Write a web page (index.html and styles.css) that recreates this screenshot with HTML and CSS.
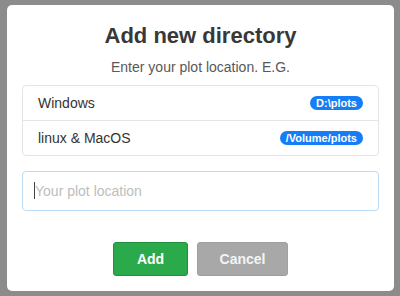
FILE: index.html
```html
<!DOCTYPE html>
<html>
<head>
    <title>Add new directory</title>
    <link rel="stylesheet" href="styles.css">
</head>
<body>
    <div class="modal">
        <h1 class="modal-title">Add new directory</h1>
        <p class="modal-sub">Enter your plot location. E.G.</p>

        <ul class="list">
            <li class="list-item">
                <span>Windows</span>
                <span class="badge">D:\plots</span>
            </li>
            <li class="list-item">
                <span>linux &amp; MacOS</span>
                <span class="badge">/Volume/plots</span>
            </li>
        </ul>

        <div class="field">
            <input class="field-input" type="text" placeholder="Your plot location">
            <span class="caret"></span>
        </div>

        <div class="actions">
            <button class="btn btn-add">Add</button>
            <button class="btn btn-cancel">Cancel</button>
        </div>
    </div>
</body>
</html>
```

FILE: styles.css
```css
body {
    margin: 0;
    height: 296px;
    background-color: #8c8c8c;
    font-family: "Liberation Sans", Arial, sans-serif;
    overflow: hidden;
}
.modal {
    box-sizing: border-box;
    width: 387px;
    height: 286px;
    margin: 5px 6px 5px 7px;
    padding: 0 15px;
    background: white;
    border-radius: 5px;
    display: flex;
    flex-direction: column;
}
.modal-title {
    margin: 18px 0 0;
    font-size: 22px;
    line-height: 26px;
    font-weight: bold;
    color: #383838;
    text-align: center;
}
.modal-sub {
    margin: 8px 0 0;
    font-size: 14px;
    line-height: 20px;
    color: #585858;
    text-align: center;
}
.list {
    list-style: none;
    margin: 8px 0 0;
    padding: 0;
    border: 1px solid #e4e4e4;
    border-radius: 4px;
}
.list-item {
    height: 34px;
    padding: 0 15px;
    display: flex;
    align-items: center;
    justify-content: space-between;
    font-size: 14px;
    color: #333;
}
.list-item + .list-item {
    border-top: 1px solid #e4e4e4;
}
.badge {
    background-color: #157ef7;
    color: white;
    font-size: 11px;
    font-weight: bold;
    line-height: 14px;
    padding: 0 6px;
    border-radius: 8px;
}
.field {
    position: relative;
    margin-top: 15px;
}
.field-input {
    box-sizing: border-box;
    display: block;
    width: 100%;
    height: 40px;
    padding: 0 12px;
    border: 1px solid #b9dbf4;
    border-radius: 4px;
    font-family: inherit;
    font-size: 14px;
    color: #333;
    outline: none;
}
.field-input::placeholder {
    color: #bdbdbd;
}
.caret {
    position: absolute;
    left: 12px;
    top: 11px;
    width: 1px;
    height: 17px;
    background: #444;
}
.actions {
    margin-top: 31px;
    display: flex;
    justify-content: center;
    gap: 9px;
}
.btn {
    box-sizing: border-box;
    height: 34px;
    border-radius: 3px;
    font-family: inherit;
    font-size: 14px;
    font-weight: bold;
    color: white;
    cursor: pointer;
}
.btn-add {
    width: 75px;
    background-color: #2aaa4b;
    border: 1px solid #22913e;
}
.btn-cancel {
    width: 91px;
    background-color: #a8a8a8;
    border: 1px solid #a0a0a0;
    color: #f4f4f4;
}
```
